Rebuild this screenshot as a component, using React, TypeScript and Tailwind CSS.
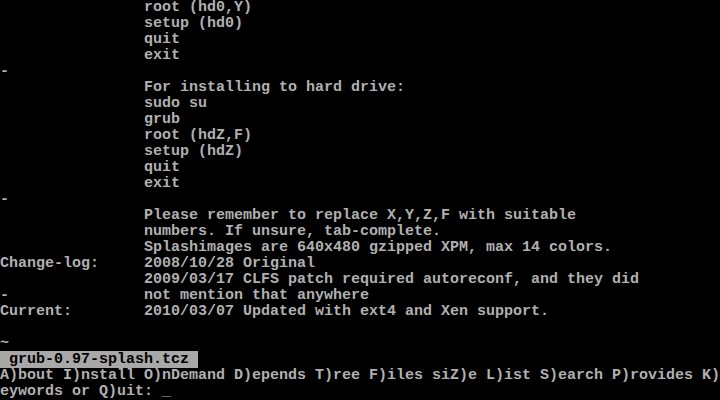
const pad = (s: string) => ' '.repeat(16) + s;

const lines: string[] = [
  pad('root (hd0,Y)'),
  pad('setup (hd0)'),
  pad('quit'),
  pad('exit'),
  '-',
  pad('For installing to hard drive:'),
  pad('sudo su'),
  pad('grub'),
  pad('root (hdZ,F)'),
  pad('setup (hdZ)'),
  pad('quit'),
  pad('exit'),
  '-',
  pad('Please remember to replace X,Y,Z,F with suitable'),
  pad('numbers. If unsure, tab-complete.'),
  pad('Splashimages are 640x480 gzipped XPM, max 14 colors.'),
  'Change-log:     2008/10/28 Original',
  pad('2009/03/17 CLFS patch required autoreconf, and they did'),
  '-               not mention that anywhere',
  'Current:        2010/03/07 Updated with ext4 and Xen support.',
  '',
  '~',
];

export default function App() {
  return (
    <div
      className="w-[720px] h-[400px] overflow-hidden bg-black text-[#b0b0b0] text-[15px] font-bold leading-[16px] whitespace-pre"
      style={{ fontFamily: '"Liberation Mono", monospace' }}
    >
      {lines.map((l, i) => (
        <div key={i} className="h-4">{l}</div>
      ))}
      <div className="h-4">
        <span className="bg-[#a8a8a8] text-black"> grub-0.97-splash.tcz </span>
      </div>
      <div className="h-4">A)bout I)nstall O)nDemand D)epends T)ree F)iles siZ)e L)ist S)earch P)rovides K)</div>
      <div className="h-4">eywords or Q)uit: _</div>
    </div>
  );
}
